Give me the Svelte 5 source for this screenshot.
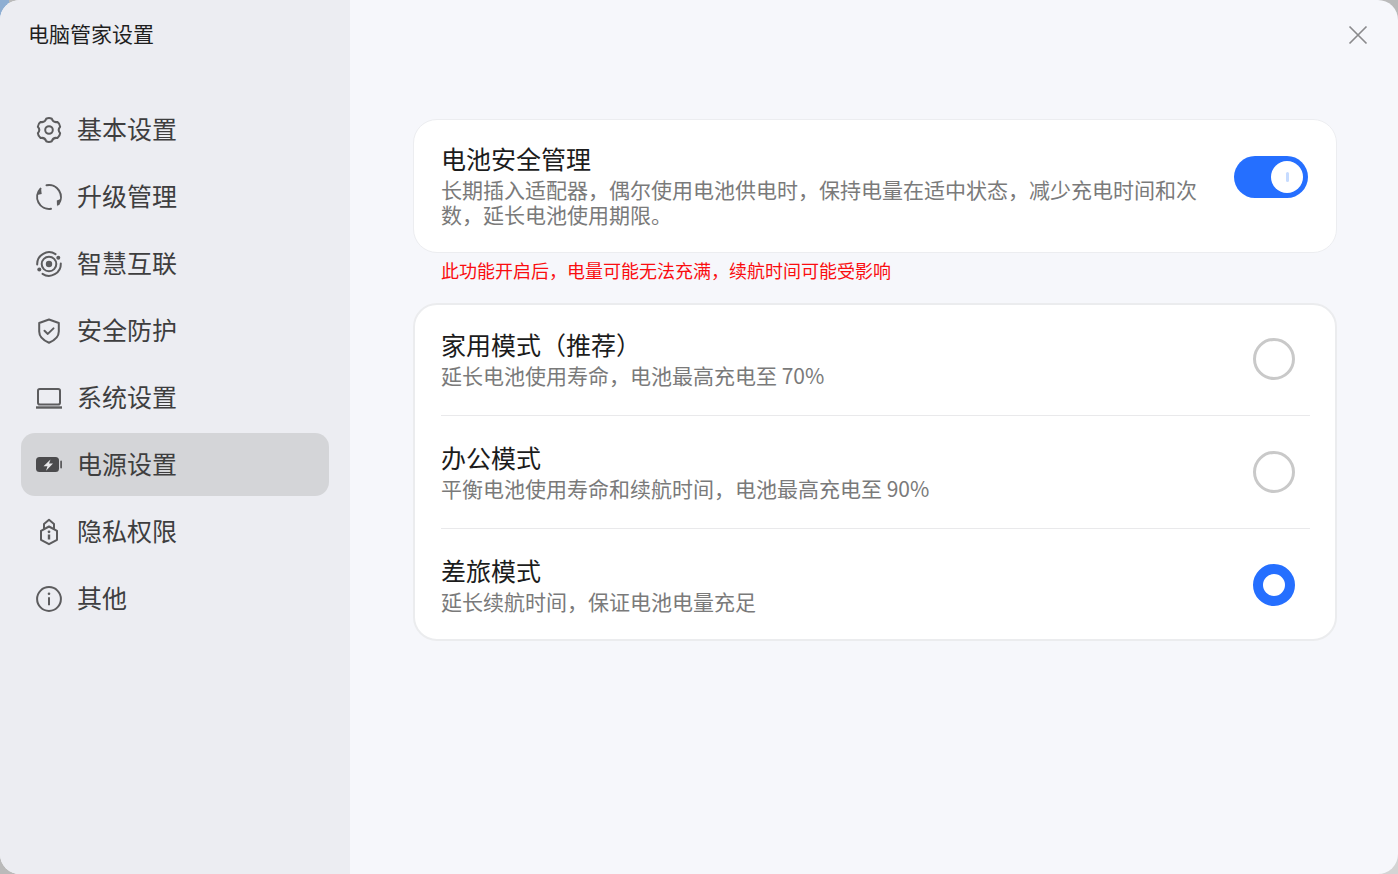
<script>
	const navItems = [
		{ id: 'basic', label: '基本设置' },
		{ id: 'upgrade', label: '升级管理' },
		{ id: 'link', label: '智慧互联' },
		{ id: 'security', label: '安全防护' },
		{ id: 'system', label: '系统设置' },
		{ id: 'power', label: '电源设置' },
		{ id: 'privacy', label: '隐私权限' },
		{ id: 'other', label: '其他' }
	];

	const modes = [
		{ title: '家用模式（推荐）', desc: '延长电池使用寿命，电池最高充电至 70%' },
		{ title: '办公模式', desc: '平衡电池使用寿命和续航时间，电池最高充电至 90%' },
		{ title: '差旅模式', desc: '延长续航时间，保证电池电量充足' }
	];

	// six rounded lobes, one of them pointing straight up
	function gearPath() {
		const pt = (deg, r) => {
			const a = (deg * Math.PI) / 180;
			return `${(13 + r * Math.cos(a)).toFixed(2)} ${(13 + r * Math.sin(a)).toFixed(2)}`;
		};
		let d = `M${pt(-104, 11.6)}`;
		for (let k = 0; k < 6; k++) {
			const a = -90 + k * 60;
			d += ` Q${pt(a, 12.6)} ${pt(a + 14, 11.6)}`;
			d += ` Q${pt(a + 30, 8.2)} ${pt(a + 46, 11.6)}`;
		}
		return d + 'z';
	}

	let active = $state('power');
	let selected = $state(2);
	let enabled = $state(true);
</script>

<div class="window">
	<aside class="sidebar">
		<div class="app-title">电脑管家设置</div>
		<nav class="nav">
			{#each navItems as item}
				<button class="nav-item" class:active={active === item.id} onclick={() => (active = item.id)}>
					<svg class="nav-icon" viewBox="0 0 26 26" fill="none" stroke="#5c5c5e" stroke-width="2">
						{#if item.id === 'basic'}
							<path d={gearPath()} stroke-linejoin="round" />
							<circle cx="13" cy="13" r="3.800" />
						{:else if item.id === 'upgrade'}
							<path d="M10.500 1.300A12 12 0 0 1 22.500 20.300" stroke-linecap="round" />
							<path d="M15 24.800A12 12 0 0 1 4.500 4.600" stroke-linecap="round" />
							<path d="M25.500 14.800l-4.700 1.800.2 6z" fill="#5c5c5e" stroke="none" />
							<path d="M1 11l4.700-1.100-.7-6z" fill="#5c5c5e" stroke="none" />
						{:else if item.id === 'link'}
							<path d="M1.200 13.500A11.800 11.800 0 0 1 19.500 3.200" stroke-linecap="round" />
							<path d="M24.800 12.500A11.800 11.800 0 0 1 6.500 22.800" stroke-linecap="round" />
							<circle cx="13" cy="13" r="7.300" />
							<circle cx="13" cy="13" r="3.200" fill="#5c5c5e" stroke="none" />
							<circle cx="22.300" cy="6.800" r="2" fill="#5c5c5e" stroke="none" />
							<circle cx="3.300" cy="18.500" r="2" fill="#5c5c5e" stroke="none" />
						{:else if item.id === 'security'}
							<path d="M13 1.500l9.800 3.500v8.500c0 5-4.200 8.900-9.800 11.200C7.400 22.400 3.200 18.500 3.200 13.500V5z" stroke-linejoin="round" />
							<path d="M8.500 12.800l3.300 3.100 5.700-5.500" stroke-linecap="round" stroke-linejoin="round" />
						{:else if item.id === 'system'}
							<rect x="2" y="4" width="22" height="15.500" rx="1.800" />
							<path d="M0 22.500h26" stroke-width="2.400" />
						{:else if item.id === 'power'}
							<rect x="0" y="5" width="23" height="15" rx="3.500" fill="#4b4b4d" stroke="none" />
							<rect x="24.200" y="8.500" width="1.800" height="8" rx=".9" fill="#5c5c5e" stroke="none" />
							<path d="M14.500 7.500L7.500 14.200h4L10 18.800l7-7.200h-4z" fill="#e8e8ea" stroke="none" />
						{:else if item.id === 'privacy'}
							<path d="M8 10.500V5L13 .8 18 5v5.500" stroke-linejoin="round" />
							<path d="M13 7.500l8 4.300v9L13 25.200l-8-4.400v-9z" stroke-linejoin="round" />
							<circle cx="13" cy="12.800" r="1.400" fill="#5c5c5e" stroke="none" />
							<path d="M13 15.500v5" stroke-width="2.400" />
						{:else}
							<circle cx="13" cy="13" r="11.900" />
							<circle cx="13" cy="7.800" r="1.300" fill="#5c5c5e" stroke="none" />
							<path d="M13 11.300v8" />
						{/if}
					</svg>
					<span>{item.label}</span>
				</button>
			{/each}
		</nav>
	</aside>

	<main class="content">
		<button class="close" aria-label="关闭">
			<svg viewBox="0 0 20 20" width="20" height="20" fill="none" stroke="#8a8a8c" stroke-width="1.700">
				<path d="M1.500 1.500l17 17M18.500 1.500l-17 17" />
			</svg>
		</button>

		<section class="card master">
			<div class="master-text">
				<h2>电池安全管理</h2>
				<p>长期插入适配器，偶尔使用电池供电时，保持电量在适中状态，减少充电时间和次数，延长电池使用期限。</p>
			</div>
			<button class="switch" class:on={enabled} aria-label="电池安全管理" onclick={() => (enabled = !enabled)}>
				<span class="knob"><i></i></span>
			</button>
		</section>

		<p class="warning">此功能开启后，电量可能无法充满，续航时间可能受影响</p>

		<section class="card modes">
			{#each modes as mode, i}
				<button class="mode" onclick={() => (selected = i)}>
					<span class="mode-text">
						<strong>{mode.title}</strong>
						<small>{mode.desc}</small>
					</span>
					<span class="radio" class:checked={selected === i}></span>
				</button>
			{/each}
		</section>
	</main>
</div>

<style>
	:global(body) {
		background:
			radial-gradient(ellipse 9px 19px at 0 0, #8eaed2 98%, transparent 100%),
			radial-gradient(circle at 100% 100%, #d4d4d4 0 40px, transparent 41px),
			#bababa;
		font-family: "Noto Sans CJK SC", "Noto Sans", sans-serif;
	}

	button {
		font: inherit;
		border: none;
		background: none;
		padding: 0;
		text-align: left;
		cursor: pointer;
	}

	.window {
		width: 1398px;
		height: 874px;
		display: flex;
		overflow: hidden;
		border-radius: 20px;
		background: #f6f7fb;
	}

	.sidebar {
		width: 350px;
		flex: none;
		background: #ecedf2;
	}

	.app-title {
		padding: 18px 0 0 28px;
		height: 76px;
		box-sizing: border-box;
		font-size: 21px;
		line-height: 30px;
		color: #1f1f1f;
	}

	.nav {
		padding: 22px 21px 0;
		display: flex;
		flex-direction: column;
		gap: 4px;
	}

	.nav-item {
		height: 63px;
		display: flex;
		align-items: center;
		gap: 15px;
		padding-left: 15px;
		border-radius: 14px;
		font-size: 25px;
		color: #3e3e3f;
	}

	.nav-item span {
		padding-bottom: 4px;
	}

	.nav-item.active {
		background: #d4d5d8;
	}

	.nav-icon {
		width: 26px;
		height: 26px;
		flex: none;
		overflow: visible;
	}

	.content {
		flex: 1;
		position: relative;
		padding: 119px 61px 0 63px;
	}

	.close {
		position: absolute;
		top: 25px;
		right: 30px;
		width: 20px;
		height: 20px;
	}

	.close svg {
		display: block;
	}

	.card {
		background: #fff;
		border-radius: 24px;
		box-sizing: border-box;
	}

	.master {
		height: 134px;
		border: 1px solid #ecedf0;
		display: flex;
		align-items: center;
		padding: 0 28px 0 27px;
	}

	.master-text {
		width: 772px;
		padding-bottom: 4px;
	}

	h2 {
		margin: 0;
		font-size: 25px;
		line-height: 32px;
		font-weight: 400;
		color: #1c1c1c;
	}

	.master-text p {
		margin: 3px 0 0;
		font-size: 21px;
		line-height: 25px;
		color: #7a7a7a;
	}

	.switch {
		margin-left: auto;
		align-self: flex-start;
		margin-top: 36px;
		width: 74px;
		height: 42px;
		border-radius: 21px;
		background: #c9c9cb;
		display: flex;
		align-items: center;
		padding: 0 5px;
		box-sizing: border-box;
	}

	.switch.on {
		background: #256fff;
		justify-content: flex-end;
	}

	.knob {
		width: 32px;
		height: 32px;
		border-radius: 50%;
		background: #fff;
		display: flex;
		align-items: center;
		justify-content: center;
	}

	.knob i {
		width: 3px;
		height: 10px;
		border-radius: 2px;
		background: #c6dbff;
	}

	.warning {
		margin: 4px 0 0 28px;
		height: 46px;
		font-size: 18px;
		line-height: 26px;
		color: #fa0d10;
	}

	.modes {
		border: 2px solid #ebecee;
		padding: 0 25px 0 26px;
		height: 338px;
	}

	.mode {
		width: 100%;
		height: 113px;
		box-sizing: border-box;
		display: flex;
		align-items: center;
		justify-content: space-between;
		border-bottom: 1px solid #e9e9eb;
		padding-right: 15px;
	}

	.mode:first-child {
		margin-top: -2px;
	}

	.mode:last-child {
		border-bottom-color: transparent;
	}

	.mode-text {
		display: flex;
		flex-direction: column;
	}

	.mode-text strong {
		font-weight: 400;
		font-size: 25px;
		line-height: 32px;
		color: #1c1c1c;
	}

	.mode-text small {
		font-size: 21px;
		line-height: 30px;
		color: #7a7a7a;
	}

	.radio {
		width: 42px;
		height: 42px;
		box-sizing: border-box;
		border-radius: 50%;
		border: 3px solid #c9c9c9;
	}

	.radio.checked {
		border: 10px solid #256fff;
	}
</style>
